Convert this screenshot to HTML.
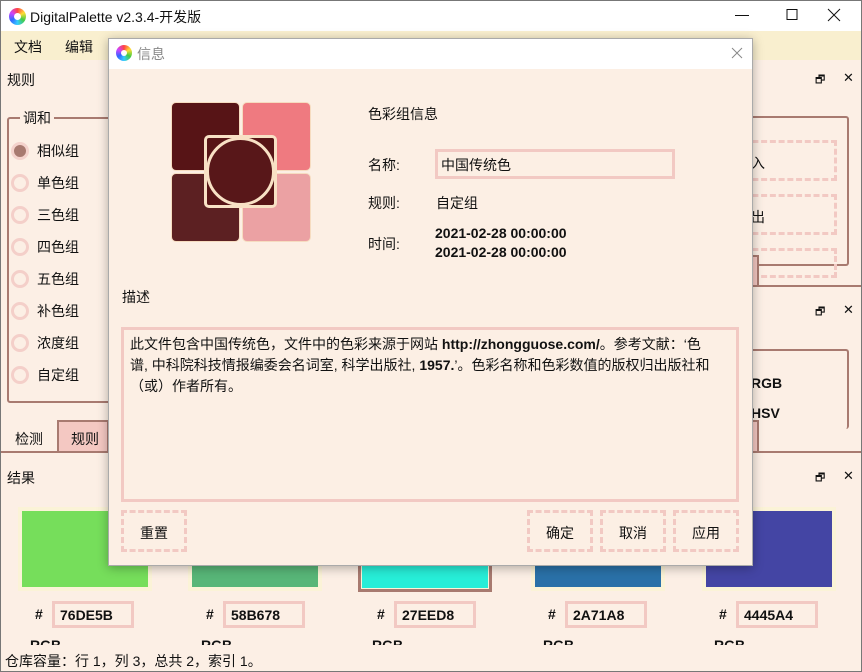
<!DOCTYPE html>
<html><head><meta charset="utf-8"><style>
*{margin:0;padding:0;box-sizing:border-box}
body{width:862px;height:672px;position:relative;overflow:hidden;background:#fcefe5;font-family:"Liberation Sans","Noto Sans CJK SC",sans-serif;font-size:14px;color:#111}
.a{position:absolute;white-space:nowrap}
.dash{position:absolute;border:3px dashed #f2c9c3}
.pk{position:absolute;border:3px solid #f2c9c3}
.br{position:absolute;border:2px solid #a87a70;border-radius:3px}
.rad{position:absolute;left:11px;width:18px;height:18px;border-radius:50%;border:3px solid #f4cfc9}
.sw{position:absolute;top:507px;width:134px;height:84px;background:#fbf3d7;padding:4px}
.sw div{width:100%;height:100%}
.hx{position:absolute;top:601px;width:82px;height:27px;border:3px solid #f2c9c3;font-weight:bold;padding:3px 5px;font-size:14px}
.fl{position:absolute;font-size:11px}
</style></head><body>
<div class="a" style="left:0;top:0;width:862px;height:31px;background:#fff"></div>
<div class="a" style="left:9px;top:8px;width:17px;height:17px;border-radius:50%;background:conic-gradient(#f44,#fd3,#4c4,#3cf,#36f,#c4f,#f44)"></div>
<div class="a" style="left:14px;top:13px;width:7px;height:7px;border-radius:50%;background:#fff"></div>
<div class="a" style="left:30px;top:7px;font-size:14px">DigitalPalette v2.3.4-开发版</div>
<svg class="a" style="left:735px;top:8px" width="110" height="16"><path d="M0 7.5H14M52 1.5h10v10h-10zM93 1l12 12M105 1L93 13" stroke="#111" stroke-width="1" fill="none"/></svg>
<div class="a" style="left:0;top:31px;width:862px;height:29px;background:#f9efcf"></div>
<div class="a" style="left:14px;top:37px">文档</div><div class="a" style="left:65px;top:37px">编辑</div>
<div class="a" style="left:7px;top:70px">规则</div>
<div class="fl" style="left:815px;top:71px">🗗</div><div class="a" style="left:843px;top:70px;font-size:13px">✕</div>
<div class="br" style="left:7px;top:117px;width:120px;height:286px"></div>
<div class="a" style="left:20px;top:108px;background:#fcefe5;padding:0 3px">调和</div>
<div class="rad" style="top:142px;background:#a87a70;border-color:#f4d2cc"></div>
<div class="rad" style="top:174px"></div><div class="rad" style="top:206px"></div><div class="rad" style="top:238px"></div><div class="rad" style="top:270px"></div><div class="rad" style="top:302px"></div><div class="rad" style="top:334px"></div><div class="rad" style="top:366px"></div>
<div class="a" style="left:37px;top:141px">相似组</div><div class="a" style="left:37px;top:173px">单色组</div><div class="a" style="left:37px;top:205px">三色组</div><div class="a" style="left:37px;top:237px">四色组</div><div class="a" style="left:37px;top:269px">五色组</div><div class="a" style="left:37px;top:301px">补色组</div><div class="a" style="left:37px;top:333px">浓度组</div><div class="a" style="left:37px;top:365px">自定组</div>
<div class="a" style="left:2px;top:451px;width:32px;height:2px;background:#a87a70"></div>
<div class="a" style="left:15px;top:429px">检测</div>
<div class="a" style="left:57px;top:420px;width:52px;height:33px;background:#f4c8c2;border:2px solid #a87a70"></div>
<div class="a" style="left:71px;top:429px">规则</div>
<div class="a" style="left:0;top:451px;width:862px;height:2px;background:#a87a70"></div>
<div class="br" style="left:700px;top:116px;width:149px;height:150px;border-left:none"></div>
<div class="dash" style="left:700px;top:140px;width:137px;height:41px"></div>
<div class="dash" style="left:700px;top:194px;width:137px;height:41px"></div>
<div class="dash" style="left:700px;top:248px;width:137px;height:30px"></div>
<div class="a" style="left:751px;top:153px">入</div><div class="a" style="left:751px;top:207px">出</div>
<div class="a" style="left:740px;top:255px;width:19px;height:32px;background:#f4c8c2;border:2px solid #a87a70"></div>
<div class="a" style="left:700px;top:285px;width:162px;height:2px;background:#a87a70"></div>
<div class="fl" style="left:815px;top:303px">🗗</div><div class="a" style="left:843px;top:302px;font-size:13px">✕</div>
<div class="br" style="left:700px;top:349px;width:149px;height:80px;border-left:none;border-bottom:none"></div>
<div class="a" style="left:751px;top:375px;font-weight:bold">RGB</div><div class="a" style="left:751px;top:405px;font-weight:bold">HSV</div>
<div class="a" style="left:740px;top:420px;width:19px;height:33px;background:#f4c8c2;border:2px solid #a87a70"></div>
<div class="a" style="left:7px;top:468px">结果</div>
<div class="fl" style="left:815px;top:469px">🗗</div><div class="a" style="left:843px;top:468px;font-size:13px">✕</div>
<div class="sw" style="left:18px"><div style="background:#76de5b"></div></div>
<div class="sw" style="left:188px"><div style="background:#58b678"></div></div>
<div class="sw" style="left:358px;border:3px solid #a87a70;padding:1px;height:85px"><div style="background:#27eed8"></div></div>
<div class="sw" style="left:531px"><div style="background:#2a71a8"></div></div>
<div class="sw" style="left:702px"><div style="background:#4445a4"></div></div>
<div class="a" style="left:35px;top:606px;font-weight:bold">#</div><div class="hx" style="left:52px">76DE5B</div>
<div class="a" style="left:206px;top:606px;font-weight:bold">#</div><div class="hx" style="left:223px">58B678</div>
<div class="a" style="left:377px;top:606px;font-weight:bold">#</div><div class="hx" style="left:394px">27EED8</div>
<div class="a" style="left:548px;top:606px;font-weight:bold">#</div><div class="hx" style="left:565px">2A71A8</div>
<div class="a" style="left:719px;top:606px;font-weight:bold">#</div><div class="hx" style="left:736px">4445A4</div>
<div class="a" style="left:30px;top:637px;font-weight:bold;height:8px;overflow:hidden">RGB</div>
<div class="a" style="left:201px;top:637px;font-weight:bold;height:8px;overflow:hidden">RGB</div>
<div class="a" style="left:372px;top:637px;font-weight:bold;height:8px;overflow:hidden">RGB</div>
<div class="a" style="left:543px;top:637px;font-weight:bold;height:8px;overflow:hidden">RGB</div>
<div class="a" style="left:714px;top:637px;font-weight:bold;height:8px;overflow:hidden">RGB</div>
<div class="a" style="left:0;top:646px;width:862px;height:26px;background:#fcefe5"></div>
<div class="a" style="left:5px;top:651px">仓库容量：行 1，列 3，总共 2，索引 1。</div>
<div class="a" style="left:0;top:0;width:862px;height:672px;border:1px solid #777"></div>
<!-- dialog -->
<div class="a" style="left:108px;top:38px;width:645px;height:528px;background:#fcefe4;border:1px solid #aaa;box-shadow:0 2px 10px rgba(0,0,0,.3)"></div>
<div class="a" style="left:109px;top:39px;width:643px;height:30px;background:#fff"></div>
<div class="a" style="left:116px;top:45px;width:16px;height:16px;border-radius:50%;background:conic-gradient(#f44,#fd3,#4c4,#3cf,#36f,#c4f,#f44)"></div>
<div class="a" style="left:121px;top:50px;width:6px;height:6px;border-radius:50%;background:#fff"></div>
<div class="a" style="left:137px;top:44px;color:#888">信息</div>
<svg class="a" style="left:731px;top:47px" width="12" height="12"><path d="M1 1l10 10M11 1L1 11" stroke="#888" stroke-width="1"/></svg>
<div class="a" style="left:171px;top:102px;width:69px;height:69px;background:#571416;border-radius:5px;border:1px solid #f6dcc0"></div>
<div class="a" style="left:242px;top:102px;width:69px;height:69px;background:#ef7a80;border-radius:5px;border:1px solid #f6dcc0"></div>
<div class="a" style="left:171px;top:173px;width:69px;height:69px;background:#5c2022;border-radius:5px;border:1px solid #f6dcc0"></div>
<div class="a" style="left:242px;top:173px;width:69px;height:69px;background:#eba1a3;border-radius:5px;border:1px solid #f6dcc0"></div>
<div class="a" style="left:204px;top:135px;width:73px;height:73px;background:#571416;border-radius:5px;border:3px solid #f8e1c5"></div>
<div class="a" style="left:206px;top:137px;width:69px;height:69px;background:#581719;border-radius:50%;border:3px solid #f8e1c5"></div>
<div class="a" style="left:368px;top:104px">色彩组信息</div>
<div class="a" style="left:368px;top:155px">名称:</div>
<div class="pk" style="left:435px;top:149px;width:240px;height:30px"></div>
<div class="a" style="left:441px;top:155px">中国传统色</div>
<div class="a" style="left:368px;top:193px">规则:</div><div class="a" style="left:436px;top:193px">自定组</div>
<div class="a" style="left:368px;top:234px">时间:</div>
<div class="a" style="left:435px;top:225px;font-weight:bold">2021-02-28 00:00:00</div>
<div class="a" style="left:435px;top:244px;font-weight:bold">2021-02-28 00:00:00</div>
<div class="a" style="left:122px;top:287px">描述</div>
<div class="pk" style="left:121px;top:327px;width:618px;height:175px"></div>
<div class="a" style="left:130px;top:334px;line-height:21px;white-space:normal;width:590px">此文件包含中国传统色，文件中的色彩来源于网站 <b>http://zhongguose.com/</b>。参考文献：‘色<br>谱, 中科院科技情报编委会名词室, 科学出版社, <b>1957.</b>’。色彩名称和色彩数值的版权归出版社和<br>（或）作者所有。</div>
<div class="dash" style="left:121px;top:510px;width:66px;height:42px"></div><div class="a" style="left:140px;top:523px">重置</div>
<div class="dash" style="left:527px;top:510px;width:66px;height:42px"></div><div class="a" style="left:546px;top:523px">确定</div>
<div class="dash" style="left:600px;top:510px;width:66px;height:42px"></div><div class="a" style="left:619px;top:523px">取消</div>
<div class="dash" style="left:673px;top:510px;width:66px;height:42px"></div><div class="a" style="left:692px;top:523px">应用</div>
</body></html>
